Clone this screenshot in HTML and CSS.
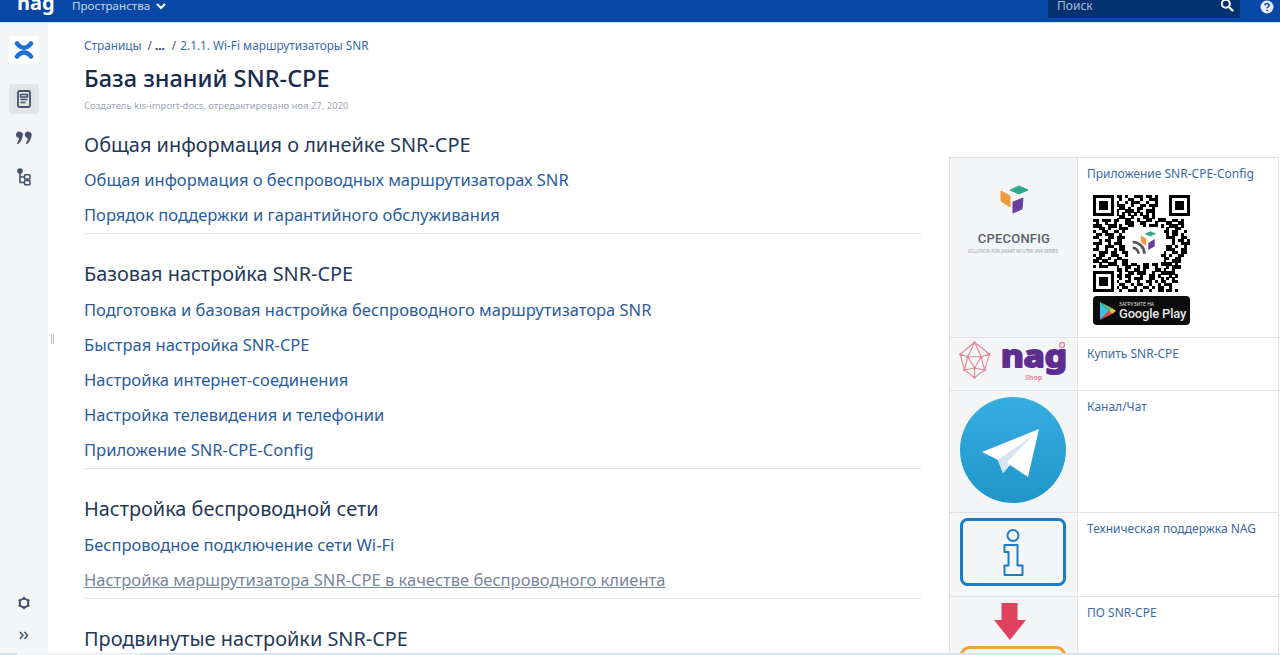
FILE: index.html
```html
<!DOCTYPE html>
<html lang="ru">
<head>
    <meta charset="UTF-8">
    <title>База знаний SNR-CPE</title>
    <link rel="stylesheet" href="styles.css">
</head>
<body>
    <div class="topbar">
        <span class="top-logo">nag</span>
        <span class="top-menu">Пространства</span>
        <svg class="top-caret" width="10" height="7" viewBox="0 0 10 7"><path d="M1.5 1.5 5 5l3.5-3.500" fill="none" stroke="#fff" stroke-width="2" stroke-linecap="round"/></svg>
        <div class="top-right">
            <div class="search">
                <span>Поиск</span>
                <svg width="14" height="14" viewBox="0 0 14 14"><circle cx="5.8" cy="5.8" r="4" fill="none" stroke="#fff" stroke-width="2"/><path d="m9 9 3.5 3.5" stroke="#fff" stroke-width="2.4" stroke-linecap="round"/></svg>
            </div>
            <svg class="help" width="14" height="14" viewBox="0 0 14 14"><circle cx="7" cy="7" r="6.5" fill="#e9eef7"/><path d="M4.900 5.400C5 4.100 5.900 3.500 7 3.500c1.200 0 2.100.7 2.100 1.800 0 1.500-2 1.500-2 3" fill="none" stroke="#0747a6" stroke-width="1.5"/><circle cx="7.100" cy="10.300" r=".9" fill="#0747a6"/></svg>
        </div>
    </div>

    <div class="page">
        <div class="sidebar">
            <div class="side-top">
                <div class="side-logo">
                    <svg width="20" height="20" viewBox="0 0 20 20"><path d="M3 3.500C7 9 13 9 17 3.500M3 16.500C7 11 13 11 17 16.500" fill="none" stroke="#1b6fd8" stroke-width="4.5" stroke-linecap="round"/></svg>
                </div>
                <div class="side-item active">
                    <svg width="14" height="18" viewBox="0 0 14 18"><rect x="1" y="1" width="12" height="16" rx="1.5" fill="none" stroke="#42526e" stroke-width="1.8"/><path d="M3.500 4.500h7V7h-7zM3.500 9.500h7M3.500 12.500h5" fill="none" stroke="#42526e" stroke-width="1.3"/></svg>
                </div>
                <div class="side-item">
                    <svg width="16" height="14" viewBox="0 0 16 14"><path d="M0 3.500a3.200 3.200 0 1 1 6.800 1.200C6.200 8 4.500 11 2.200 13.200L.9 12.300C2 10.900 2.800 9.400 3 7.200 1.300 7 0 5.500 0 3.500zM8.800 3.500a3.200 3.200 0 1 1 6.800 1.200C15 8 13.300 11 11 13.200l-1.300-.9c1.100-1.400 1.900-2.900 2.100-5.100-1.700-.2-3-1.700-3-3.700z" fill="#42526e"/></svg>
                </div>
                <div class="side-item">
                    <svg width="14" height="18" viewBox="0 0 14 18"><circle cx="3" cy="3" r="2.8" fill="#42526e"/><path d="M3 4v10.500h4M3 9h4" fill="none" stroke="#42526e" stroke-width="1.6"/><rect x="7.500" y="6.800" width="5.500" height="4.200" rx=".8" fill="none" stroke="#42526e" stroke-width="1.5"/><rect x="7.500" y="12.500" width="5.500" height="4.200" rx=".8" fill="none" stroke="#42526e" stroke-width="1.5"/></svg>
                </div>
            </div>
            <div class="side-bottom">
                <svg width="14" height="14" viewBox="0 0 14 14"><circle cx="7" cy="7" r="4.3" fill="none" stroke="#42526e" stroke-width="2"/><path d="M7 .8v2M7 11.200v2M1.600 3.900l1.700 1M10.700 9.100l1.700 1M1.600 10.100l1.700-1M10.700 4.900l1.700-1" stroke="#42526e" stroke-width="1.8"/></svg>
                <svg width="10" height="9" viewBox="0 0 10 9"><path d="m1 1 3 3.500L1 8M5.500 1l3 3.500-3 3.500" fill="none" stroke="#42526e" stroke-width="1.5"/></svg>
            </div>
        </div>
        <div class="grip"><i></i><i></i></div>

        <div class="content">
            <div class="breadcrumbs">
                <a>Страницы</a><span class="sep">/</span><b>...</b><span class="sep sep-last">/</span><a>2.1.1. Wi-Fi маршрутизаторы SNR</a>
            </div>
            <h1>База знаний SNR-CPE</h1>
            <p class="meta">Создатель kis-import-docs, отредактировано ноя 27, 2020</p>

            <div class="columns">
                <div class="articles">
                    <section class="group">
                        <h2>Общая информация о линейке SNR-CPE</h2>
                        <a>Общая информация о беспроводных маршрутизаторах SNR</a>
                        <a>Порядок поддержки и гарантийного обслуживания</a>
                    </section>
                    <section class="group">
                        <h2>Базовая настройка SNR-CPE</h2>
                        <a>Подготовка и базовая настройка беспроводного маршрутизатора SNR</a>
                        <a>Быстрая настройка SNR-CPE</a>
                        <a>Настройка интернет-соединения</a>
                        <a>Настройка телевидения и телефонии</a>
                        <a>Приложение SNR-CPE-Config</a>
                    </section>
                    <section class="group">
                        <h2>Настройка беспроводной сети</h2>
                        <a>Беспроводное подключение сети Wi-Fi</a>
                        <a class="visited">Настройка маршрутизатора SNR-CPE в качестве беспроводного клиента</a>
                    </section>
                    <section class="group last">
                        <h2>Продвинутые настройки SNR-CPE</h2>
                    </section>
                </div>

                <div class="links">
                    <div class="row row-app">
                        <div class="cell-img">
                            <svg width="34" height="30" viewBox="0 0 34 30">
                                <path d="m14 5 9-4 9 4-9 4z" fill="#2fa98c" stroke="#2fa98c" stroke-linejoin="round"/>
                                <path d="m5 6 9 5v11l-9-6z" fill="#ef9a3c" stroke="#ef9a3c" stroke-linejoin="round"/>
                                <path d="m17 17 10-4-1 11-9 4z" fill="#6b3fa0" stroke="#6b3fa0" stroke-linejoin="round"/>
                            </svg>
                            <div class="cpe-name">CPECONFIG</div>
                            <div class="cpe-sub">SOLUTION FOR SMART ROUTER SNR SERIES</div>
                        </div>
                        <div class="cell-text">
                            <a>Приложение SNR-CPE-Config</a>
                            <div class="qr">
                                <svg width="97" height="97" viewBox="0 0 33 33" shape-rendering="crispEdges">
                                    <rect width="33" height="33" fill="#fff"/>
                                    <path fill="none" stroke="#000" stroke-width="1.150" d="M8 .5h2m1 0h1m2 0h3m1 0h2m1 0h1M9 1.500h1m2 0h2m2 0h1m2 0h3M8 2.500h1m2 0h1m1 0h3m2 0h1m2 0h1M8 3.500h3m2 0h1m2 0h2m1 0h3M9 4.500h2m1 0h1m2 0h2m3 0h1M8 5.500h1m2 0h3m1 0h1m2 0h3M8 6.500h1m1 0h1m1 0h1m1 0h1m1 0h1m1 0h1m1 0h1M9 7.500h2m2 0h1m3 0h2m1 0h1M0 8.500h2m1 0h3m1 0h2m2 0h2m2 0h1m2 0h2m2 0h3m2 0h2m1 0h1M1 9.500h1m2 0h1m2 0h1m3 0h3m2 0h2m3 0h1m3 0h2m2 0h2M0 10.500h3m2 0h3m1 0h1m2 0h2m3 0h1m1 0h3m1 0h1m2 0h3m1 0h1M2 11.500h2m1 0h1m3 0h3m1 0h1m3 0h2m2 0h2m2 0h1m2 0h2M0 12.500h1m2 0h2m2 0h2m1 0h1m13 0h2m1 0h2m2 0h1M1 13.500h2m1 0h3m2 0h1m15 0h1m1 0h2m1 0h1M0 14.500h2m3 0h2m1 0h3m14 0h3m2 0h2M2 15.500h1m1 0h2m2 0h2m17 0h1m1 0h2m1 0h1M0 16.500h3m2 0h1m1 0h3m17 0h1m2 0h3M1 17.500h1m2 0h3m2 0h2m14 0h2m1 0h1m2 0h1M0 18.500h2m2 0h1m2 0h1m1 0h2m14 0h3m2 0h2M2 19.500h3m1 0h2m2 0h2m12 0h1m2 0h2m1 0h2M0 20.500h1m1 0h2m2 0h3m2 0h2m1 0h2m2 0h1m1 0h2m1 0h2m1 0h1m2 0h2M1 21.500h2m2 0h1m2 0h2m2 0h1m2 0h2m2 0h2m1 0h1m1 0h2m2 0h2M0 22.500h2m1 0h2m2 0h1m2 0h3m2 0h1m1 0h2m2 0h1m2 0h1m2 0h3M2 23.500h1m2 0h3m2 0h2m1 0h2m2 0h2m1 0h2m1 0h4m1 0h1M0 24.500h1m1 0h3m3 0h1m2 0h2m2 0h1m1 0h2m2 0h1m3 0h1m1 0h3M8 25.500h2m1 0h1m2 0h2m1 0h1m3 0h2m1 0h1m2 0h1M9 26.500h1m2 0h2m1 0h3m2 0h1m2 0h5M8 27.500h2m1 0h2m3 0h1m2 0h2m1 0h1m3 0h1m1 0h1M9 28.500h1m2 0h1m1 0h3m2 0h2m2 0h1m1 0h1m1 0h1M8 29.500h1m2 0h2m2 0h1m2 0h2m1 0h1m1 0h2m2 0h2M9 30.500h2m2 0h1m1 0h2m2 0h1m2 0h1m1 0h3M8 31.500h1m1 0h2m2 0h1m2 0h2m1 0h1m1 0h2m2 0h1M9 32.500h1m2 0h3m1 0h1m2 0h1m2 0h2m1 0h2m1 0h1"/>
                                    <path fill="#fff" d="M0 0h8v8H0zM25 0h8v8h-8zM0 25h8v8H0z"/>
                                    <path d="M0 0h7v7H0zM1 1v5h5V1zM2 2h3v3H2zM26 0h7v7h-7zM27 1v5h5V1zM28 2h3v3h-3zM0 26h7v7H0zM1 27v5h5v-5zM2 28h3v3H2z" fill-rule="evenodd"/>
                                    <rect x="12" y="11" width="11" height="12" fill="#fff"/>
                                    <g shape-rendering="auto">
                                        <path d="M13.500 18a2 2 0 0 1 2 2M13.500 16a4 4 0 0 1 4 4" fill="none" stroke="#555" stroke-width=".9"/>
                                        <path d="m17.500 13.200 2-.9 2 .9-2 .9z" fill="#2fa98c"/>
                                        <path d="M16.300 13.800v2.400l1.800 1v-2.400z" fill="#ef9a3c"/>
                                        <path d="M21 15v2.400l-2.200 1.300v-2.400z" fill="#6b3fa0"/>
                                    </g>
                                </svg>
                                <div class="gplay">
                                    <svg width="18" height="20" viewBox="0 0 18 20"><path d="M1 1v18l9-9z" fill="#3fbde8"/><path d="M1 1l9 9 3-3z" fill="#4fc47a"/><path d="M1 19l9-9 3 3z" fill="#e8504c"/><path d="m13 7 4 3-4 3-3-3z" fill="#f8c32f"/></svg>
                                    <div class="gplay-text">
                                        <small>ЗАГРУЗИТЕ НА</small>
                                        <span>Google Play</span>
                                    </div>
                                </div>
                            </div>
                        </div>
                    </div>
                    <div class="row row-shop">
                        <div class="cell-img">
                            <svg width="108" height="44" viewBox="0 0 108 44">
                                <path d="M15.500 1.300 30.500 13.300 25.500 29 15.500 36.700 5.500 29 1.200 13.300zM8.800 15.700H22.200L15.500 27zM15.500 1.300 8.800 15.700M15.500 1.300l6.700 14.400M1.200 13.300l7.600 2.400M30.500 13.300l-8.300 2.400M5.500 29l3.300-13.300M5.500 29l10-2M25.500 29l-3.300-13.300M25.500 29l-10-2M15.500 36.700V27" fill="none" stroke="#e58a98" stroke-width="1.1"/>
                                <g fill="#e58a98">
                                    <circle cx="15.500" cy="1.800" r="1.500"/><circle cx="1.700" cy="13.300" r="1.500"/><circle cx="30" cy="13.300" r="1.500"/>
                                    <circle cx="5.500" cy="29" r="1.500"/><circle cx="25.500" cy="29" r="1.500"/><circle cx="15.500" cy="36" r="1.500"/>
                                    <circle cx="8.800" cy="15.700" r="1.500"/><circle cx="22.200" cy="15.700" r="1.500"/><circle cx="15.500" cy="27" r="1.500"/>
                                </g>
                                <text class="nag-word" x="42" y="26" textLength="66" lengthAdjust="spacingAndGlyphs">nag</text>
                                <text class="nag-shop" x="66" y="39">Shop</text>
                                <circle cx="103" cy="4" r="2.500" fill="none" stroke="#e58a98" stroke-width="1.300"/>
                            </svg>
                        </div>
                        <div class="cell-text"><a>Купить SNR-CPE</a></div>
                    </div>
                    <div class="row row-tg">
                        <div class="cell-img">
                            <svg width="106" height="106" viewBox="0 0 106 106">
                                <defs><linearGradient id="tg" x1="0" y1="0" x2="0" y2="1"><stop offset="0" stop-color="#37aee2"/><stop offset="1" stop-color="#1e96c8"/></linearGradient></defs>
                                <circle cx="53" cy="53" r="53" fill="url(#tg)"/>
                                <path d="M22 55 79 32 68 80 50 68 43 76 38 63z" fill="#fff"/>
                                <path d="M38 63 73 38 47 65 50 68 43 76z" fill="#d5e4ee"/>
                            </svg>
                        </div>
                        <div class="cell-text"><a>Канал/Чат</a></div>
                    </div>
                    <div class="row row-info">
                        <div class="cell-img">
                            <svg width="106" height="68" viewBox="0 0 106 68">
                                <rect x="1.500" y="1.500" width="103" height="65" rx="6" fill="none" stroke="#1a7cc4" stroke-width="3"/>
                                <circle cx="53" cy="17.500" r="5.500" fill="none" stroke="#1a7cc4" stroke-width="2"/>
                                <path d="M44.500 27h13v20.500h5V57h-18v-9.500h4V34h-4z" fill="none" stroke="#1a7cc4" stroke-width="2" stroke-linejoin="round"/>
                            </svg>
                        </div>
                        <div class="cell-text"><a>Техническая поддержка NAG</a></div>
                    </div>
                    <div class="row row-soft">
                        <div class="cell-img">
                            <svg width="106" height="58" viewBox="0 0 106 58">
                                <path d="M41.500 6h16v17H66L50 43 34 23h7.500z" fill="#e0415f"/>
                                <rect x="1.500" y="50.500" width="103" height="30" rx="8" fill="none" stroke="#f0a23c" stroke-width="3"/>
                            </svg>
                        </div>
                        <div class="cell-text"><a>ПО SNR-CPE</a></div>
                    </div>
                </div>
            </div>
        </div>
    </div>
    <div class="bottom-strip"></div>
</body>
</html>
```

FILE: styles.css
```css
body {
    margin: 0;
    height: 655px;
    overflow: hidden;
    font-family: "Noto Sans", "Open Sans", sans-serif;
    color: #172b4d;
    background: #fff;
    position: relative;
}
a {
    color: #2b5c9e;
    text-decoration: none;
}

.topbar {
    height: 22px;
    background: #0747a6;
    border-bottom: 1px solid #cfe3f2;
    display: flex;
    align-items: center;
    color: #fff;
    overflow: hidden;
}
.top-logo {
    margin-left: 17px;
    margin-top: -17px;
    width: 55px;
    font-size: 20px;
    font-weight: 700;
    line-height: 22px;
}
.top-menu {
    font-size: 11.6px;
    color: #c9d8ef;
    margin-top: -11px;
}
.top-caret {
    margin: -10px 0 0 6px;
}
.top-right {
    margin-left: auto;
    display: flex;
    align-items: center;
}
.search {
    width: 177px;
    height: 18px;
    margin-top: -4px;
    padding: 0 6px 0 9px;
    background: #04316f;
    color: #a9bedc;
    font-size: 12px;
    display: flex;
    justify-content: space-between;
    align-items: flex-start;
    line-height: 12px;
}
.search svg {
    margin-top: -2px;
}
.help {
    margin: -8px 6px 0 20px;
}

.page {
    display: flex;
    height: 632px;
}
.sidebar {
    width: 48px;
    flex: none;
    background: #f4f5f7;
    display: flex;
    flex-direction: column;
    justify-content: space-between;
    align-items: center;
}
.side-top {
    display: flex;
    flex-direction: column;
    align-items: center;
    padding-top: 13px;
}
.side-logo {
    width: 30px;
    height: 28px;
    background: #fff;
    display: flex;
    align-items: center;
    justify-content: center;
    margin-bottom: 20px;
}
.side-item {
    width: 30px;
    height: 30px;
    border-radius: 3px;
    display: flex;
    align-items: center;
    justify-content: center;
    margin-bottom: 9px;
}
.side-item.active {
    background: #e2e4e9;
}
.side-bottom {
    display: flex;
    flex-direction: column;
    align-items: center;
    gap: 21px;
    padding-bottom: 15px;
}
.grip {
    width: 0;
    height: 10px;
    margin: 311px 0 0 3px;
    display: flex;
    gap: 1px;
}
.grip i {
    flex: none;
    width: 1px;
    height: 10px;
    background: #b3bac5;
}

.content {
    flex: 1;
    padding: 14px 0 0 33px;
    min-width: 0;
}
.breadcrumbs {
    font-size: 11.8px;
    line-height: 16px;
    color: #42526e;
}
.breadcrumbs a {
    color: #3c6aa5;
}
.breadcrumbs .sep {
    margin: 0 3px 0 6px;
}
.breadcrumbs .sep-last {
    margin: 0 4px 0 7px;
}
.breadcrumbs b {
    color: #172b4d;
}
h1 {
    margin: 10px 0 0;
    font-size: 23.5px;
    font-weight: 500;
    line-height: 30px;
    color: #172b4d;
}
.meta {
    margin: 6px 0 0;
    font-size: 9.5px;
    line-height: 14px;
    color: #a0a6b1;
}

.columns {
    display: flex;
    gap: 28px;
    align-items: flex-start;
}
.articles {
    width: 837px;
    flex: none;
}
.group {
    border-bottom: 1px solid #dfe1e6;
    padding-bottom: 4px;
    margin-bottom: 25px;
}
.group:first-child {
    padding-top: 17px;
}
.group.last {
    border-bottom: 0;
}
.group h2 {
    margin: 0;
    padding-bottom: 1px;
    font-size: 19.9px;
    font-weight: 400;
    line-height: 29px;
    color: #253858;
}
.group:first-child h2 {
    padding-bottom: 0;
}
.group a {
    display: block;
    margin-top: 7px;
    font-size: 16.53px;
    line-height: 28px;
}
.group a.visited {
    color: #7a869a;
    text-decoration: underline;
}

.links {
    width: 328px;
    flex: none;
    margin-top: 44px;
    border-top: 1px solid #dfe1e6;
    border-left: 1px solid #dfe1e6;
    border-right: 1px solid #dfe1e6;
}
.row {
    display: flex;
    border-bottom: 1px solid #dfe1e6;
}
.row-app { height: 179px; }
.row-shop { height: 52px; }
.row-tg { height: 121px; }
.row-info { height: 83px; }
.row-soft { height: 70px; border-bottom: 0; }
.cell-img {
    width: 126px;
    padding-right: 1px;
    flex: none;
    background: #f4f5f7;
    border-right: 1px solid #dfe1e6;
    display: flex;
    flex-direction: column;
    align-items: center;
    overflow: hidden;
}
.row-app .cell-img { padding-top: 27px; height: 152px; }
.row-shop .cell-img { padding-top: 3px; height: 49px; }
.row-tg .cell-img { padding-top: 6px; height: 115px; }
.row-info .cell-img { padding-top: 5px; height: 78px; }
.cell-text {
    padding: 8px 9px;
    font-size: 12px;
    line-height: 16px;
}
.cell-text a {
    color: #3c6aa5;
}
.cpe-name {
    margin: 17px 0 0 2px;
    font-family: Roboto, sans-serif;
    font-size: 13px;
    font-weight: 500;
    color: #59616b;
    letter-spacing: .2px;
    line-height: 14px;
}
.cpe-sub {
    margin-top: 3px;
    font-size: 4.4px;
    line-height: 5px;
    color: #9a9fa6;
    white-space: nowrap;
}
.qr {
    margin: 13px 0 0 6px;
    width: 97px;
}
.qr > svg {
    display: block;
}
.gplay {
    height: 29px;
    margin-top: 4px;
    background: #0b0b0b;
    border-radius: 4px;
    display: flex;
    align-items: center;
    padding-left: 6px;
    gap: 2px;
    color: #e6e6e6;
}
.gplay-text {
    display: flex;
    flex-direction: column;
}
.gplay-text small {
    font-size: 5px;
    line-height: 6px;
}
.gplay-text span {
    font-family: Roboto, sans-serif;
    font-size: 13px;
    font-weight: 500;
    line-height: 14px;
    letter-spacing: -.2px;
    white-space: nowrap;
}
.nag-word {
    font-size: 30px;
    font-weight: 700;
    fill: #5e2d91;
    stroke: #5e2d91;
    stroke-width: 2px;
    stroke-linejoin: round;
}
.nag-shop {
    font-size: 7px;
    font-weight: 700;
    fill: #e58a98;
}

.bottom-strip {
    position: absolute;
    left: 0;
    right: 0;
    bottom: 0;
    height: 2px;
    background: linear-gradient(to right, #cfe0ea 17px, #f0f2f4 17px, #f0f2f4 140px, #d6e5ee 140px);
}
```
